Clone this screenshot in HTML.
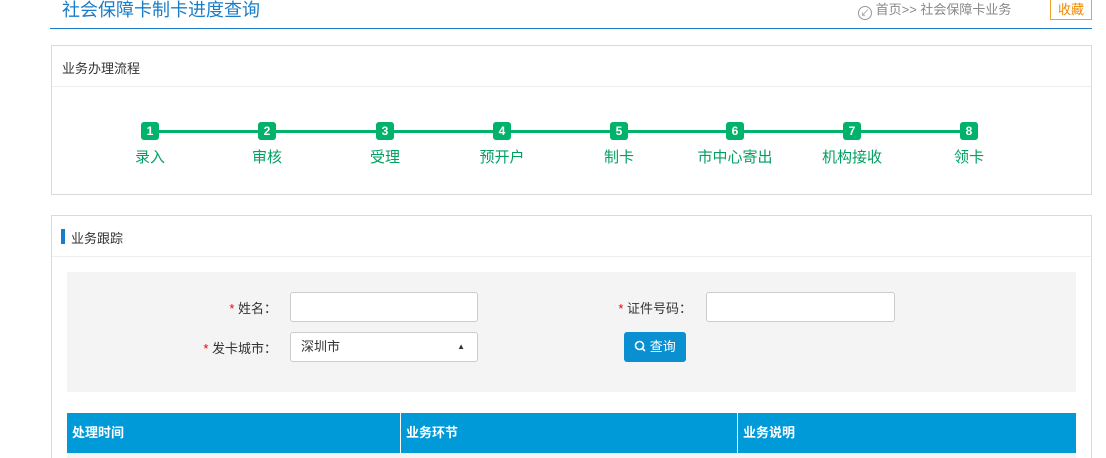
<!DOCTYPE html>
<html><head><meta charset="utf-8"><style>
*{margin:0;padding:0;box-sizing:border-box}
html,body{width:1106px;height:458px;overflow:hidden}
body{background:#fff;font-family:"Liberation Sans","Noto Sans CJK SC",sans-serif;position:relative;color:#333}
.a{position:absolute}
.title{left:62px;top:-1px;font-size:18px;color:#1a7dc9;line-height:22px}
.hl{left:50px;top:28px;width:1042px;height:1px;background:#1a7dc9}
.crumb{left:858px;top:1px;font-size:13px;color:#888;line-height:18px}
.fav{left:1050px;top:0;width:42px;height:20px;border:1px solid #f0a030;border-top:none;color:#f08a00;font-size:13px;text-align:center;line-height:19px}
.panel{border:1px solid #d9d9e0;background:#fff}
.ph{font-size:13px;color:#333}
.div{height:1px;background:#eee}
.sq{width:18px;height:18px;background:#00b26a;border-radius:3px;color:#fff;font-size:12px;font-weight:bold;text-align:center;line-height:18px}
.lbl{font-size:15px;color:#00a060;width:100px;text-align:center;line-height:18px}
input{position:absolute;height:30px;border:1px solid #ccc;border-radius:3px;background:#fff}
.fl{font-size:13px;color:#333;text-align:right}
.fl b{color:#e00;font-weight:normal}
.th{top:413px;height:40px;background:#009ad9;color:#fff;font-weight:bold;font-size:13px;line-height:40px;padding-left:5px}
</style></head><body>
<div class="a title">社会保障卡制卡进度查询</div>
<div class="a hl"></div>
<div class="a crumb"><span style="display:inline-block;width:14px;height:14px;border:1px solid #999;border-radius:50%;font-size:9px;text-align:center;line-height:12px;vertical-align:-2px">&#8601;</span> 首页&gt;&gt; 社会保障卡业务</div>
<div class="a fav">收藏</div>

<div class="a panel" style="left:51px;top:45px;width:1041px;height:150px"></div>
<div class="a ph" style="left:62px;top:58px">业务办理流程</div>
<div class="a div" style="left:52px;top:86px;width:1039px"></div>
<div class="a" style="left:150px;top:130px;width:819px;height:3px;background:#00b26a"></div>
<div class="a sq" style="left:141px;top:122px">1</div>
<div class="a sq" style="left:258px;top:122px">2</div>
<div class="a sq" style="left:376px;top:122px">3</div>
<div class="a sq" style="left:493px;top:122px">4</div>
<div class="a sq" style="left:610px;top:122px">5</div>
<div class="a sq" style="left:726px;top:122px">6</div>
<div class="a sq" style="left:843px;top:122px">7</div>
<div class="a sq" style="left:960px;top:122px">8</div>
<div class="a lbl" style="left:100px;top:149px">录入</div>
<div class="a lbl" style="left:217px;top:149px">审核</div>
<div class="a lbl" style="left:335px;top:149px">受理</div>
<div class="a lbl" style="left:452px;top:149px">预开户</div>
<div class="a lbl" style="left:569px;top:149px">制卡</div>
<div class="a lbl" style="left:685px;top:149px">市中心寄出</div>
<div class="a lbl" style="left:802px;top:149px">机构接收</div>
<div class="a lbl" style="left:919px;top:149px">领卡</div>

<div class="a panel" style="left:51px;top:215px;width:1041px;height:260px"></div>
<div class="a" style="left:61px;top:229px;width:4px;height:15px;background:#1a7dc9"></div>
<div class="a ph" style="left:71px;top:228px">业务跟踪</div>
<div class="a div" style="left:52px;top:256px;width:1039px"></div>
<div class="a" style="left:67px;top:272px;width:1009px;height:120px;background:#f4f4f4"></div>
<div class="a fl" style="left:170px;top:298px;width:107px"><b>*</b> 姓名：</div>
<input style="left:290px;top:292px;width:188px">
<div class="a fl" style="left:580px;top:298px;width:112px"><b>*</b> 证件号码：</div>
<input style="left:706px;top:292px;width:189px">
<div class="a fl" style="left:170px;top:338px;width:107px"><b>*</b> 发卡城市：</div>
<div class="a" style="left:290px;top:332px;width:188px;height:30px;border:1px solid #ccc;border-radius:3px;background:#fff;font-size:13px;line-height:28px;padding-left:10px">深圳市<span style="position:absolute;right:12px;top:0;font-size:8px">&#9650;</span></div>
<div class="a" style="left:624px;top:332px;width:62px;height:30px;background:#0a8fd0;border-radius:3px;color:#fff;font-size:13px;line-height:30px;text-align:center">
<svg width="12" height="12" viewBox="0 0 12 12" style="vertical-align:-1px"><circle cx="5.5" cy="5.5" r="4" fill="none" stroke="#fff" stroke-width="1.6"/><path d="M8.3 8.3L11 11" stroke="#fff" stroke-width="1.6"/></svg> 查询</div>
<div class="a th" style="left:67px;width:333px">处理时间</div>
<div class="a th" style="left:401px;width:336px">业务环节</div>
<div class="a th" style="left:738px;width:338px">业务说明</div>
<div class="a" style="left:67px;top:453px;width:1009px;height:5px;background:#f4f4f4"></div>
</body></html>
